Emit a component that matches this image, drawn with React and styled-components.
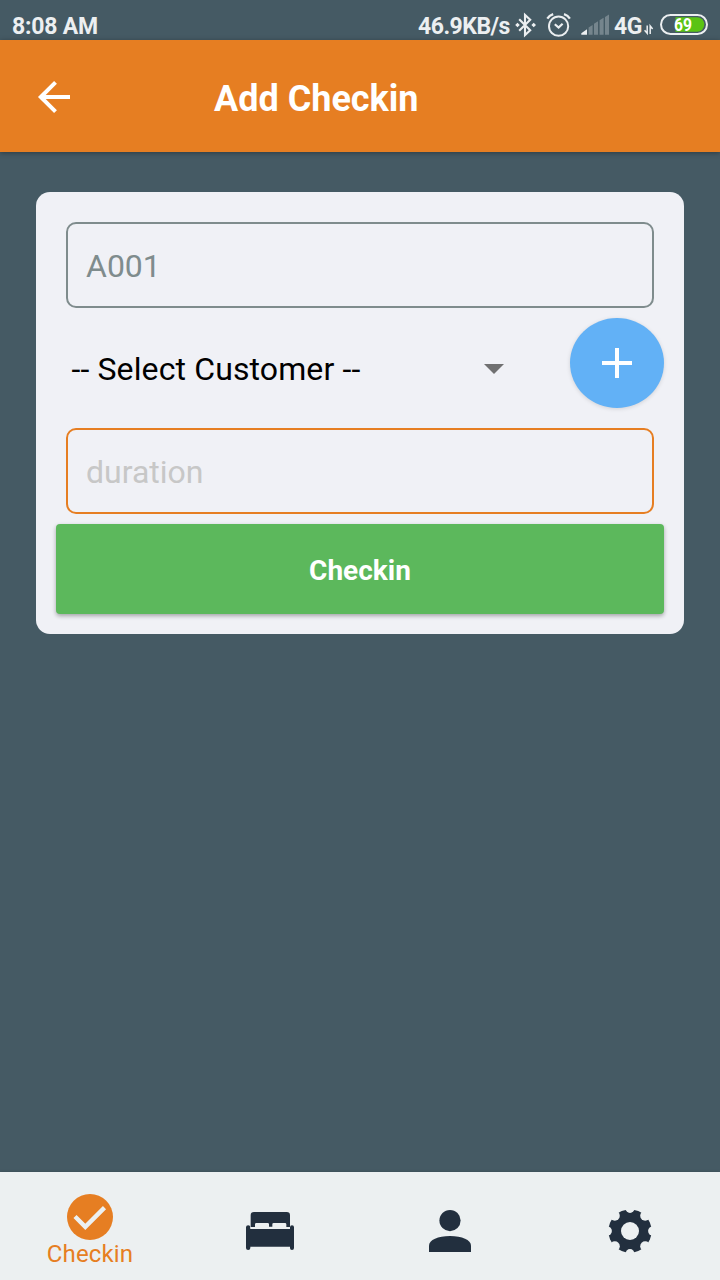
import React from "react";
import styled, { createGlobalStyle } from "styled-components";

const GlobalStyle = createGlobalStyle`
  * { box-sizing: border-box; }
  body { margin: 0; font-family: Roboto, sans-serif; }
  svg { display: block; flex: none; }
`;

const Screen = styled.div`
  width: 720px;
  height: 1280px;
  display: flex;
  flex-direction: column;
  background: #455a64;
  overflow: hidden;
`;

const StatusBar = styled.div`
  height: 40px;
  padding: 13px 12px 0;
  display: flex;
  justify-content: space-between;
  color: #eceff1;
  font-size: 23px;
  line-height: 28px;
  font-weight: 700;
`;

const StatusGroup = styled.div`
  display: flex;
  margin-right: -12px;
`;

const StatusText = styled.span`
  width: ${(p) => (p.$width ? `${p.$width}px` : "auto")};
  white-space: nowrap;
  letter-spacing: ${(p) => p.$spacing || 0}px;
`;

const StatusIcons = styled.svg`
  margin-top: -13px;
`;

const Header = styled.header`
  height: 112px;
  flex: none;
  padding: 2px 36px 0;
  display: flex;
  align-items: center;
  background: #e67e22;
  box-shadow: 0 1px 5px rgba(0, 0, 0, 0.35);
`;

const BackButton = styled.button`
  width: 178px;
  padding: 0;
  border: 0;
  background: none;
`;

const Title = styled.h1`
  margin: 0;
  padding-top: 4px;
  color: #fff;
  font-size: 36px;
  line-height: 42px;
  font-weight: 700;
`;

const Content = styled.main`
  flex: 1;
  padding: 40px 36px;
`;

const Card = styled.form`
  padding: 20px;
  border-radius: 14px;
  background: #f0f1f6;
`;

const Field = styled.input`
  display: block;
  width: 588px;
  height: 86px;
  margin: 10px;
  padding: 2px 18px 0;
  border: 2px solid ${(p) => p.$color};
  border-radius: 10px;
  outline: none;
  background: transparent;
  color: #7f8c8d;
  font: 400 32px Roboto, sans-serif;
  &::placeholder { color: #c7c7c7; opacity: 1; }
`;

const CustomerRow = styled.div`
  display: flex;
  justify-content: space-between;
  height: 90px;
  margin-bottom: 20px;
`;

const Select = styled.div`
  width: 448px;
  height: 102px;
  padding-left: 15.5px;
  display: flex;
  align-items: center;
  justify-content: space-between;
  color: #000;
  font-size: 32px;
  line-height: 38px;
  letter-spacing: 0.12px;
`;

const AddButton = styled.button`
  width: 94px;
  height: 90px;
  padding: 0;
  border: 0;
  border-radius: 50%;
  display: flex;
  align-items: center;
  justify-content: center;
  background: #62b1f6;
  box-shadow: 0 1px 4px rgba(0, 0, 0, 0.13);
`;

const SubmitButton = styled.button`
  display: block;
  width: 100%;
  height: 90px;
  padding: 3px 0 0;
  border: 0;
  border-radius: 4px;
  background: #5cb85c;
  box-shadow: 0 2px 4px rgba(0, 0, 0, 0.32);
  color: #fff;
  font: 700 28px Roboto, sans-serif;
`;

const TabBar = styled.nav`
  height: 108px;
  flex: none;
  display: grid;
  grid-template-columns: repeat(4, 1fr);
  background: #ecf0f1;
  color: #222f3e;
  box-shadow: 0 0 3px rgba(0, 0, 0, 0.2);
`;

const Tab = styled.div`
  display: flex;
  flex-direction: column;
  align-items: center;
  padding-top: ${(p) => (p.$active ? 22 : 35)}px;
  color: ${(p) => (p.$active ? "#e67e22" : "inherit")};
`;

const TabLabel = styled.span`
  font-size: 24px;
  line-height: 28px;
  letter-spacing: 0.15px;
`;

function Indicators() {
  return (
    <StatusIcons width="104" height="40" viewBox="510 0 104 40" fill="none" stroke="#eceff1">
      <path d="M519.2 19.200 530.2 30.200 525 35V15L530.2 19.800 519.2 30.800" strokeWidth="2.100" />
      <path d="M517.5 22.700 519.8 25 517.5 27.300 515.2 25ZM533.7 22.700 536 25 533.7 27.300 531.4 25Z" fill="#eceff1" stroke="none" />
      <circle cx="558.600" cy="26.200" r="9.600" strokeWidth="2" />
      <path d="M554.8 24.200 558.6 27.600 562.6 23.800" strokeWidth="2.200" />
      <path d="M547.3 18.600Q549.2 15.600 553.2 14.200M569.9 18.600Q568 15.600 564 14.200" strokeWidth="2.300" />
      <path d="M581.3 34.800V33.300L587 29.300V34.800Z" fill="#eceff1" stroke="none" />
      <path d="M588.6 34.800V27.600L592.6 25V34.800ZM594 34.800V23.800L598 21.200V34.800ZM599.600 34.800V20.200L603.6 17.800V34.800ZM605 34.800V17L609 14.500V34.800Z" fill="#75858d" stroke="none" />
    </StatusIcons>
  );
}

function Battery() {
  return (
    <StatusIcons width="78" height="40" viewBox="642 0 78 40">
      <path d="M647.2 25.500V33.200L644.6 30.200M650.2 34V26L652.6 29" fill="none" stroke="#eceff1" strokeWidth="1.500" />
      <rect x="661" y="15" width="46" height="19" rx="9.500" fill="none" stroke="#eceff1" strokeWidth="2" />
      <path d="M675.5 17.200H697a7.300 7.300 0 0 1 0 14.600H675.5Z" fill="#5ac314" />
      <text
        x="674"
        y="31"
        fill="#fff"
        fontSize="18"
        fontWeight="700"
        textLength="18"
        lengthAdjust="spacingAndGlyphs"
      >
        69
      </text>
    </StatusIcons>
  );
}

function BedIcon() {
  return (
    <svg width="48" height="48" viewBox="0 0 144 144" fill="currentColor">
      <path d="M14 60V25Q14 15 24 15H122Q132 15 132 25V60H121V52Q121 48 117 48H83Q79 48 79 52V59H69V52Q69 48 65 48H31Q27 48 27 52V60Z" />
      <path d="M0 61Q0 55 6.500 55T13 61V66H132V61Q132 55 138 55T144 61V123Q144 129 138 129T132 123V119H13V123Q13 129 6.500 129T0 123Z" />
      <path d="M13 62.500H132" stroke="#ecf0f1" strokeWidth="3" />
    </svg>
  );
}

function GearIcon() {
  const notches = Array.from({ length: 8 }, (_, i) => {
    const diagonal = i % 2 === 1;
    const distance = diagonal ? 21.5 : 22.6;
    const angle = (i * Math.PI) / 4;
    return (
      <circle
        key={i}
        cx={24 + distance * Math.cos(angle)}
        cy={24 + distance * Math.sin(angle)}
        r={diagonal ? 5 : 4.5}
        fill="#000"
      />
    );
  });
  return (
    <svg width="48" height="48" viewBox="0 0 48 48">
      <mask id="gear-cutouts">
        <rect width="48" height="48" fill="#fff" />
        {notches}
        <circle cx="24" cy="24" r="9" fill="#000" />
      </mask>
      <circle cx="24" cy="24" r="21.600" fill="currentColor" mask="url(#gear-cutouts)" />
    </svg>
  );
}

export default function App() {
  return (
    <>
      <GlobalStyle />
      <Screen>
        <StatusBar>
          <StatusText $spacing={-0.2}>8:08 AM</StatusText>
          <StatusGroup>
            <StatusText $width={92} $spacing={-0.5}>46.9KB/s</StatusText>
            <Indicators />
            <StatusText $width={28} $spacing={-0.5}>4G</StatusText>
            <Battery />
          </StatusGroup>
        </StatusBar>
        <Header>
          <BackButton type="button" aria-label="Back">
            <svg width="36" height="36" viewBox="36 79 36 36" fill="none" stroke="#fff" strokeWidth="4">
              <path d="M70 97H41M55.500 82.300 40.800 97 55.500 111.700" />
            </svg>
          </BackButton>
          <Title>Add Checkin</Title>
        </Header>
        <Content>
          <Card>
            <Field $color="#7f8c8d" defaultValue="A001" />
            <CustomerRow>
              <Select>
                -- Select Customer --
                <svg width="20" height="10" viewBox="0 0 20 10" fill="#707071">
                  <path d="M0 0H20L10 10Z" />
                </svg>
              </Select>
              <AddButton type="button" aria-label="Add customer">
                <svg width="30" height="30" viewBox="0 0 30 30" stroke="#fff" strokeWidth="4">
                  <path d="M15 0V30M0 15H30" />
                </svg>
              </AddButton>
            </CustomerRow>
            <Field $color="#e67e22" placeholder="duration" />
            <SubmitButton type="button">Checkin</SubmitButton>
          </Card>
        </Content>
        <TabBar>
          <Tab $active>
            <svg width="46" height="46" viewBox="0 0 46 46">
              <circle cx="23" cy="23" r="23" fill="currentColor" />
              <path d="M8 22.500 18.300 32.800 37.500 13.600" fill="none" stroke="#ecf0f1" strokeWidth="4.400" />
            </svg>
            <TabLabel>Checkin</TabLabel>
          </Tab>
          <Tab>
            <BedIcon />
          </Tab>
          <Tab>
            <svg width="42" height="48" viewBox="0 0 42 48" fill="currentColor">
              <circle cx="21" cy="13.600" r="10.600" />
              <path d="M0 45V38.500C0 33 9 29 21 29S42 33 42 38.500V45Z" />
            </svg>
          </Tab>
          <Tab>
            <GearIcon />
          </Tab>
        </TabBar>
      </Screen>
    </>
  );
}
